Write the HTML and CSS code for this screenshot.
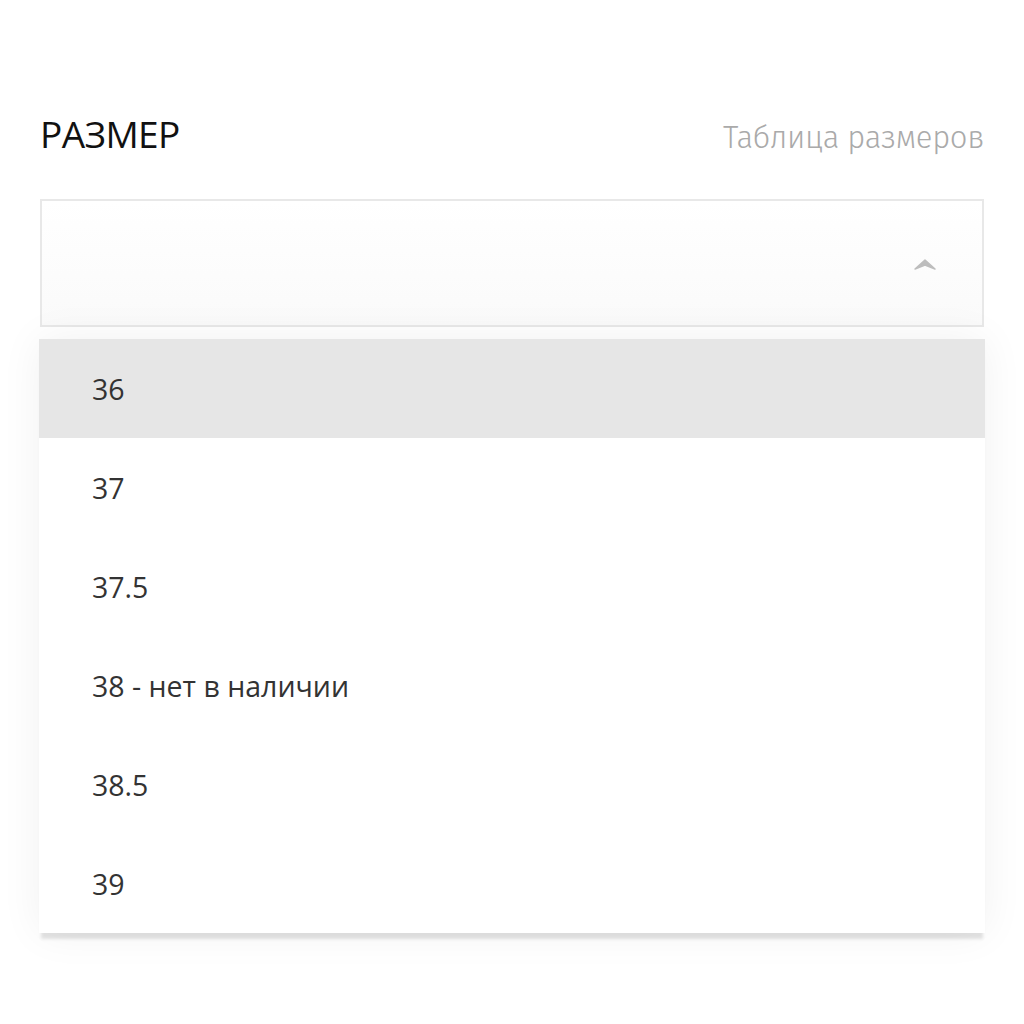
FILE: index.html
```html
<!DOCTYPE html>
<html lang="ru">
<head>
    <meta charset="UTF-8">
    <meta name="viewport" content="width=device-width, initial-scale=1.0">
    <title>Размер</title>
    <link rel="stylesheet" href="styles.css">
</head>
<body>
    <div class="size-picker">
        <div class="size-header">
            <h2>РАЗМЕР</h2>
            <a class="size-table" href="#">Таблица размеров</a>
        </div>

        <div class="select-box">
            <svg class="chevron" width="22" height="12" viewBox="0 0 22 12">
                <path d="M1 11 L11 2 L21 11 L11 7 Z" fill="#bdbdbd" stroke="#bdbdbd" stroke-width="1.5" stroke-linejoin="round"/>
            </svg>
        </div>

        <ul class="options">
            <li class="active">36</li>
            <li>37</li>
            <li>37.5</li>
            <li>38 - нет в наличии</li>
            <li>38.5</li>
            <li>39</li>
        </ul>
    </div>
</body>
</html>
```

FILE: styles.css
```css
body {
    margin: 0;
    background: #fff;
    font-family: "Open Sans", "Liberation Sans", sans-serif;
    color: #333;
}
.size-picker {
    padding: 108px 39px 80px 39px;
}
.size-header {
    display: flex;
    justify-content: space-between;
    align-items: baseline;
    padding: 0 1px;
    height: 91px;
}
.size-header h2 {
    margin: 0;
    font-weight: 400;
    font-size: 37px;
    color: #111;
    letter-spacing: -0.6px;
}
.size-table {
    font-family: "Fira Sans", "Noto Sans", sans-serif;
    font-weight: 300;
    font-size: 31px;
    color: #aaa;
    text-decoration: none;
    letter-spacing: -0.3px;
}
.select-box {
    margin: 0 1px;
    height: 124px;
    border: 2px solid #e8e8e8;
    background: linear-gradient(#fff, #fafafa);
    display: flex;
    align-items: center;
    justify-content: flex-end;
    padding-right: 46px;
}
.chevron {
    display: block;
    margin-top: 2px;
}
.options {
    list-style: none;
    margin: 12px 0 0 0;
    padding: 0;
    background: #fff;
    box-shadow: 0 8px 3px -2px rgba(0, 0, 0, 0.11), 0 0 40px rgba(0, 0, 0, 0.06);
}
.options li {
    height: 99px;
    display: flex;
    align-items: center;
    padding-left: 53px;
    font-size: 28.5px;
    color: #333;
}
.options li.active {
    background: #e6e6e6;
}
```
